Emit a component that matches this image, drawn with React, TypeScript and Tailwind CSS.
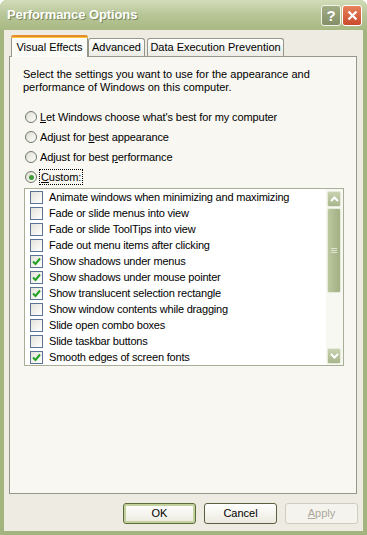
const items = [
  { label: "Animate windows when minimizing and maximizing", on: false },
  { label: "Fade or slide menus into view", on: false },
  { label: "Fade or slide ToolTips into view", on: false },
  { label: "Fade out menu items after clicking", on: false },
  { label: "Show shadows under menus", on: true },
  { label: "Show shadows under mouse pointer", on: true },
  { label: "Show translucent selection rectangle", on: true },
  { label: "Show window contents while dragging", on: false },
  { label: "Slide open combo boxes", on: false },
  { label: "Slide taskbar buttons", on: false },
  { label: "Smooth edges of screen fonts", on: true },
];

function Radio({ checked }: { checked?: boolean }) {
  return (
    <span className="w-[12px] h-[12px] rounded-full border border-[#6d7a66] bg-gradient-to-br from-[#dedcd2] to-white flex items-center justify-center shrink-0">
      {checked && <span className="w-[5px] h-[5px] rounded-full bg-[#3e9b38]" />}
    </span>
  );
}

function Check({ on }: { on: boolean }) {
  return (
    <span className="w-[13px] h-[13px] border border-[#5b7394] bg-gradient-to-br from-[#e4e3da] to-white flex items-center justify-center shrink-0">
      {on && (
        <svg width="9" height="9" viewBox="0 0 9 9">
          <path d="M1 4.5 L3.5 7 L8 1.5" stroke="#21a121" strokeWidth="2" fill="none" />
        </svg>
      )}
    </span>
  );
}

function Arrow({ up }: { up?: boolean }) {
  return (
    <div className="h-[16px] rounded-[2px] border border-[#e6ead8] bg-gradient-to-b from-[#c8d2b0] to-[#a8b58c] flex items-center justify-center">
      <svg width="9" height="6" viewBox="0 0 9 6">
        <path d={up ? "M1 5 L4.5 1.5 L8 5" : "M1 1 L4.5 4.5 L8 1"} stroke="#ffffff" strokeWidth="2" fill="none" />
      </svg>
    </div>
  );
}

export default function App() {
  return (
    <div className="w-[367px] h-[535px] flex flex-col bg-[#a4b47e] rounded-t-[7px] overflow-hidden font-['Liberation_Sans',Arial,sans-serif] text-[11px] text-black">
      {/* title bar */}
      <div className="h-[30px] shrink-0 flex items-center pl-[7px] pr-[5px] bg-gradient-to-b from-[#d3dcb9] via-[#b7c597] to-[#a9b983]">
        <span className="flex-1 text-[13px] font-bold text-white tracking-[-0.1px] [text-shadow:1px_1px_0_#7a8757]">Performance Options</span>
        <div className="w-[20px] h-[21px] rounded-[3px] border border-[#f2f4ea] bg-gradient-to-b from-[#a2ad86] to-[#848f68] flex items-center justify-center text-white font-bold text-[15px] leading-none">?</div>
        <div className="ml-[1px] w-[20px] h-[21px] rounded-[3px] border border-white bg-gradient-to-b from-[#e8805c] to-[#c9492c] flex items-center justify-center">
          <svg width="11" height="11" viewBox="0 0 11 11">
            <path d="M1.5 1.5 L9.5 9.5 M9.5 1.5 L1.5 9.5" stroke="#ffffff" strokeWidth="2.2" />
          </svg>
        </div>
      </div>

      {/* body */}
      <div className="flex-1 ml-[4px] mr-[4px] mb-[4px] bg-[#eeece2] flex flex-col pl-[5px] pr-[6px] pt-[5px]">
        {/* tabs */}
        <div className="flex items-end h-[21px] pl-[2px]">
          <div className="relative z-10 -mb-px w-[77px] h-[22px] bg-[#fbfbf8] border-x border-[#94978a] rounded-t-[3px] flex flex-col">
            <div className="h-[3px] rounded-t-[3px] bg-[#e68b2c] border-b border-[#ffc73c] -mx-px" />
            <div className="flex-1 flex items-center justify-center pb-[1px]">Visual Effects</div>
          </div>
          <div className="w-[57px] h-[18px] bg-gradient-to-b from-white to-[#ecebe4] border border-b-0 border-[#94978a] rounded-t-[3px] flex items-center justify-center">Advanced</div>
          <div className="ml-[2px] w-[137px] h-[18px] bg-gradient-to-b from-white to-[#ecebe4] border border-b-0 border-[#94978a] rounded-t-[3px] flex items-center justify-center">Data Execution Prevention</div>
        </div>

        {/* panel */}
        <div className="h-[438px] border border-[#94978a] bg-[#f8f7f2] pl-[13px] pt-[11px] flex flex-col">
          <p className="leading-[13px]">
            Select the settings you want to use for the appearance and
            <br />
            performance of Windows on this computer.
          </p>
          <div className="mt-[13px] flex flex-col tracking-[-0.1px]">
            <div className="h-[20px] flex items-center gap-[3px] pl-[2px]">
              <Radio />
              <span><u>L</u>et Windows choose what's best for my computer</span>
            </div>
            <div className="h-[20px] flex items-center gap-[3px] pl-[2px]">
              <Radio />
              <span>Adjust for <u>b</u>est appearance</span>
            </div>
            <div className="h-[20px] flex items-center gap-[3px] pl-[2px]">
              <Radio />
              <span>Adjust for best <u>p</u>erformance</span>
            </div>
            <div className="h-[20px] flex items-center gap-[2px] pl-[2px]">
              <Radio checked />
              <span className="border border-dotted border-black px-[1px] leading-[14px]"><u>C</u>ustom:</span>
            </div>
          </div>

          {/* list */}
          <div className="mt-[1px] ml-[1px] w-[320px] h-[178px] border border-[#a9ae98] bg-white flex">
            <div className="flex-1 flex flex-col">
              {items.map((it) => (
                <div key={it.label} className="h-[16px] flex items-center pl-[5px] gap-[6px]">
                  <Check on={it.on} />
                  <span className="whitespace-nowrap tracking-[-0.2px]">{it.label}</span>
                </div>
              ))}
            </div>
            <div className="w-[17px] bg-[#f8f8f3] flex flex-col p-[1px] pt-[2px] pr-[2px]">
              <Arrow up />
              <div className="mt-[1px] h-[85px] rounded-[2px] border border-[#e6ead8] bg-gradient-to-r from-[#bcc7a0] via-[#aebb90] to-[#a3b085] flex flex-col items-center justify-center gap-[1px]">
                <span className="w-[6px] h-px bg-[#dfe5cf]" />
                <span className="w-[6px] h-px bg-[#dfe5cf]" />
                <span className="w-[6px] h-px bg-[#dfe5cf]" />
              </div>
              <div className="flex-1" />
              <Arrow />
            </div>
          </div>
        </div>

        {/* buttons */}
        <div className="mt-[9px] flex justify-end gap-[8px] -mr-[1px]">
          <button className="w-[73px] h-[21px] rounded-[3px] border border-[#5c6b3c] bg-gradient-to-b from-white to-[#eceadf] shadow-[inset_0_0_0_2px_#c3d19c]">OK</button>
          <button className="w-[73px] h-[21px] rounded-[3px] border border-[#59603f] bg-gradient-to-b from-white to-[#eceadf]">Cancel</button>
          <button className="w-[73px] h-[21px] rounded-[3px] border border-[#cfcdbf] bg-[#f4f3ee] text-[#aca899]"><u>A</u>pply</button>
        </div>
      </div>
    </div>
  );
}
